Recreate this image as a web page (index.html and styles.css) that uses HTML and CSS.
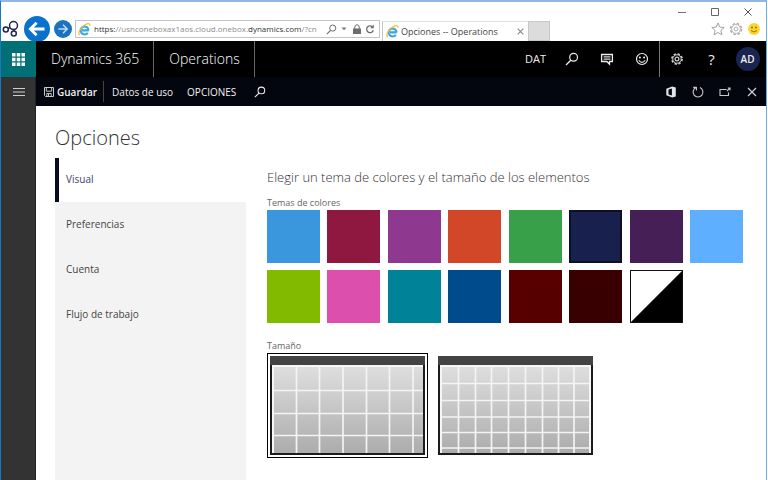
FILE: index.html
```html
<!DOCTYPE html>
<html lang="es">
<head>
<meta charset="utf-8">
<title>Opciones -- Operations</title>
<link rel="stylesheet" href="styles.css">
</head>
<body>
<svg class="defs" aria-hidden="true">
  <defs>
    <linearGradient id="shade" x1="0" y1="0" x2="0" y2="1">
      <stop offset="0" stop-color="#dedede"/><stop offset="1" stop-color="#acacac"/>
    </linearGradient>
    <symbol id="search" viewBox="0 0 14 14">
      <circle cx="8.6" cy="5.2" r="3.9" fill="none" stroke="currentColor" stroke-width="1.2"/>
      <path d="M5.8 8.2L1 13" fill="none" stroke="currentColor" stroke-width="1.3"/>
    </symbol>
    <symbol id="ie" viewBox="0 0 14 14">
      <path d="M11.6 8H4.3M11.4 7.8A4.3 4.3 0 1 0 10.6 10.6" fill="none" stroke="#35a7e3" stroke-width="2.3"/>
      <path d="M2 13C-1 11.5 3 4 8 1.6C11 .2 13.4.4 12.7 3.2" fill="none" stroke="#f2bd2c" stroke-width="1.3"/>
    </symbol>
    <symbol id="close" viewBox="0 0 10 10">
      <path d="M1 1L9 9M9 1L1 9" fill="none" stroke="currentColor" stroke-width="1.6"/>
    </symbol>
  </defs>
</svg>
<div class="window">
  <header class="browser">
    <svg class="site-logo" viewBox="0 0 18 18" aria-hidden="true" fill="none" stroke="#20264f" stroke-width="1.5">
      <circle cx="11.5" cy="5.6" r="4"/><circle cx="3.8" cy="9.6" r="2.5"/><circle cx="11.8" cy="13.6" r="2.5"/><path d="M6.2 8.6L8 7.4M11.8 9.6V11"/>
    </svg>
    <button class="nav-btn back" aria-label="Atrás"><svg viewBox="0 0 26 26"><path d="M20.5 13H7M12.6 6.8L6.4 13L12.6 19.2" fill="none" stroke="#fff" stroke-width="2.8"/></svg></button>
    <button class="nav-btn forward" aria-label="Adelante"><svg viewBox="0 0 18 18"><path d="M4.5 9H13M9 4.8L13.2 9L9 13.2" fill="none" stroke="#c4e0f6" stroke-width="1.4"/></svg></button>
    <div class="address">
      <svg class="ie" aria-hidden="true"><use href="#ie"/></svg>
      <span class="url">https:<span class="dim">//usnconeboxax1aos.cloud.onebox.</span>dynamics.com<span class="dim">/?cn</span></span>
      <svg class="addr-search" aria-hidden="true"><use href="#search"/></svg>
      <svg class="addr-caret" viewBox="0 0 6 4" aria-hidden="true"><path d="M.5.5H5.5L3 3.3z" fill="#777"/></svg>
      <svg class="addr-lock" viewBox="0 0 8 10" aria-hidden="true"><path d="M1.8 5V3a2.2 2.2 0 0 1 4.400 0V5" fill="#fff" stroke="#6d6d6d"/><path d="M0 4.500H8V10H0z" fill="#6d6d6d"/></svg>
      <svg class="addr-reload" viewBox="0 0 10 10" aria-hidden="true"><path d="M8.3 6.2A3.4 3.4 0 1 1 7.2 2.6" fill="none" stroke="#6d6d6d" stroke-width="1.3"/><path d="M8.8.6V4.2H5.2z" fill="#6d6d6d"/></svg>
    </div>
    <div class="tab">
      <svg class="ie" aria-hidden="true"><use href="#ie"/></svg>
      <span class="tab-title">Opciones -- Operations</span>
      <button class="plain tab-close" aria-label="Cerrar pestaña"><svg><use href="#close"/></svg></button>
    </div>
    <button class="new-tab" aria-label="Nueva pestaña"></button>
    <div class="chrome-end">
      <div class="window-controls">
        <button class="plain" aria-label="Minimizar"><svg viewBox="0 0 8 8"><path d="M0 4.5H8" stroke="#777"/></svg></button>
        <button class="plain" aria-label="Maximizar"><svg viewBox="0 0 8 8"><path d="M.5.5H7.5V7.5H.5z" fill="none" stroke="#666"/></svg></button>
        <button class="plain" aria-label="Cerrar"><svg viewBox="0 0 8 8"><path d="M.5.5L7.5 7.5M7.5.5L.5 7.5" stroke="#555"/></svg></button>
      </div>
      <div class="browser-tools">
        <button class="plain" aria-label="Favoritos"><svg viewBox="0 0 14 14"><path d="M7 1L8.8 5.1L13.2 5.5L9.9 8.4L10.9 12.8L7 10.5L3.1 12.8L4.1 8.4L.8 5.5L5.2 5.1z" fill="none" stroke="#999" stroke-width=".9"/></svg></button>
        <button class="plain" aria-label="Herramientas"><svg viewBox="0 0 14 14" fill="none" stroke="#aaa"><circle cx="7" cy="7" r="5.5" stroke-width="1.4" stroke-dasharray="2.6 1.72"/><circle cx="7" cy="7" r="4.4" stroke-width=".8"/><circle cx="7" cy="7" r="1.9" stroke-width=".9"/></svg></button>
        <button class="plain" aria-label="Comentarios"><svg viewBox="0 0 14 14"><circle cx="7" cy="7" r="5.9" fill="#fbd42c"/><circle cx="5" cy="5.5" r=".9" fill="#8a6a10"/><circle cx="9" cy="5.5" r=".9" fill="#8a6a10"/><path d="M4 8.5Q7 11.5 10 8.5" fill="none" stroke="#8a6a10" stroke-width=".9"/></svg></button>
      </div>
    </div>
  </header>

  <div class="app">
    <aside class="rail">
      <button class="plain waffle" aria-label="Aplicaciones"><svg viewBox="0 0 13 13" fill="#fff"><path d="M0 0h3.5v3.5H0zM4.75 0h3.5v3.5h-3.5zM9.5 0H13v3.5H9.5zM0 4.75h3.5v3.5H0zM4.75 4.75h3.5v3.5h-3.5zM9.5 4.75H13v3.5H9.5zM0 9.5h3.5V13H0zM4.75 9.5h3.5V13h-3.5zM9.5 9.5H13V13H9.5z"/></svg></button>
      <button class="plain menu" aria-label="Menú"><svg viewBox="0 0 12 8"><path d="M0 .5H12M0 4H12M0 7.5H12" stroke="#d0d0d0"/></svg></button>
    </aside>
    <div class="body">
      <div class="topbar">
        <a class="brand" href="#">Dynamics 365</a>
        <a class="brand" href="#">Operations</a>
        <div class="top-actions">
          <span class="company">DAT</span>
          <button class="plain" aria-label="Buscar"><svg><use href="#search"/></svg></button>
          <button class="plain" aria-label="Mensajes"><svg viewBox="0 0 14 14"><path d="M1.6 2.5H12.4V9.5H9.5V12.2L6.8 9.5H1.6z" fill="none" stroke="#eee" stroke-width="1.3"/><path d="M3.6 4.8H10.4M3.6 7.1H10.4" stroke="#ddd" stroke-width="1.2"/></svg></button>
          <button class="plain" aria-label="Opinión"><svg viewBox="0 0 14 14"><circle cx="7" cy="7" r="5.5" fill="none" stroke="#eee" stroke-width="1.2"/><circle cx="4.9" cy="5.4" r="1" fill="#eee"/><circle cx="9.1" cy="5.4" r="1" fill="#eee"/><path d="M3.8 8.2Q7 12.6 10.2 8.2" fill="none" stroke="#eee" stroke-width="1.1"/></svg></button>
          <button class="plain split" aria-label="Configuración"><svg viewBox="0 0 14 14" fill="none" stroke="#ccc"><circle cx="7" cy="7" r="5.1" stroke-width="1.6" stroke-dasharray="2.3 1.7"/><circle cx="7" cy="7" r="4.2"/><circle cx="7" cy="7" r="1.9" stroke-width="1.2"/></svg></button>
          <button class="plain help" aria-label="Ayuda">?</button>
          <button class="plain user"><span class="avatar">AD</span></button>
        </div>
      </div>
      <div class="commands">
        <button class="plain save"><svg viewBox="0 0 10 10" fill="none" stroke="#c9c9cc"><path d="M.5.5H9.5V9.5H1.5L.5 8.5zM2.3.5V4.2H7.7V.5M2.8 9.5V6.5H7.2V9.5M4.5 7V9"/></svg>Guardar</button>
        <button class="plain">Datos de uso</button>
        <button class="plain">OPCIONES</button>
        <button class="plain find" aria-label="Buscar acción"><svg><use href="#search"/></svg></button>
        <div class="page-actions">
          <button class="plain" aria-label="Office"><svg viewBox="0 0 12 12"><path fill-rule="evenodd" d="M1.3 2.8L7.2.6L10.8 1.6V10.4L7.2 11.4L1.3 9.3zM3.5 3.6V8.6L6.9 9.6V2.4z" fill="#e4e4ea"/></svg></button>
          <button class="plain" aria-label="Actualizar"><svg viewBox="0 0 12 12"><path d="M4 1.6A4.900 4.900 0 1 0 8 1.6M1.200 1.400H4.400V4.400" fill="none" stroke="#c9c9cc" stroke-width="1.1"/></svg></button>
          <button class="plain" aria-label="Abrir en ventana nueva"><svg viewBox="0 0 12 12"><path d="M7.500 3.500H1V9.500H9.500V6.500M8 5L10.600 2.400M8.800 2H11V4.200" fill="none" stroke="#c9c9cc" stroke-width="1.1"/></svg></button>
          <button class="plain" aria-label="Cerrar página"><svg viewBox="0 0 12 12"><path d="M2 2L10 10M10 2L2 10" stroke="#d4d4d8" stroke-width="1.1"/></svg></button>
        </div>
      </div>
      <main class="page">
        <h1>Opciones</h1>
        <div class="columns">
          <nav class="sections">
            <a class="current" href="#">Visual</a>
            <a href="#">Preferencias</a>
            <a href="#">Cuenta</a>
            <a href="#">Flujo de trabajo</a>
          </nav>
          <form class="settings">
            <h2>Elegir un tema de colores y el tamaño de los elementos</h2>
            <fieldset>
              <legend>Temas de colores</legend>
              <div class="themes">
                <input type="radio" name="theme" class="sky" aria-label="Azul cielo">
                <input type="radio" name="theme" class="wine" aria-label="Vino">
                <input type="radio" name="theme" class="purple" aria-label="Morado">
                <input type="radio" name="theme" class="orange" aria-label="Naranja">
                <input type="radio" name="theme" class="green" aria-label="Verde">
                <input type="radio" name="theme" class="navy" aria-label="Azul marino" checked>
                <input type="radio" name="theme" class="plum" aria-label="Ciruela">
                <input type="radio" name="theme" class="light" aria-label="Azul claro">
                <input type="radio" name="theme" class="lime" aria-label="Lima">
                <input type="radio" name="theme" class="pink" aria-label="Rosa">
                <input type="radio" name="theme" class="teal" aria-label="Turquesa">
                <input type="radio" name="theme" class="blue" aria-label="Azul">
                <input type="radio" name="theme" class="red" aria-label="Rojo oscuro">
                <input type="radio" name="theme" class="brown" aria-label="Marrón">
                <input type="radio" name="theme" class="contrast" aria-label="Contraste alto">
              </div>
            </fieldset>
            <fieldset>
              <legend>Tamaño</legend>
              <div class="sizes">
                <label class="size"><input type="radio" name="size" aria-label="Grande" checked>
                  <svg viewBox="0 0 155 99"><path d="M0 0H155V99H0z" fill="#1c1c1c"/><path d="M0 0H155V9H0z" fill="#434343"/><path d="M2 9H153V97H2z" fill="#f6f6f6"/><path d="M4 11H153V97H4z" fill="url(#shade)"/><path d="M26.5 10V97M49.5 10V97M73 10V97M96.500 10V97M119.500 10V97M143 10V97M3 34.500H153M3 57.500H153M3 79.500H153" stroke="#f4f4f4" stroke-width="1.7"/></svg>
                </label>
                <label class="size"><input type="radio" name="size" aria-label="Pequeño">
                  <svg viewBox="0 0 155 99"><path d="M0 0H155V99H0z" fill="#1c1c1c"/><path d="M0 0H155V9H0z" fill="#434343"/><path d="M2 9H153V97H2z" fill="#f6f6f6"/><path d="M4 11H151V97H4z" fill="url(#shade)"/><path d="M20.500 10V97M37.500 10V97M53.500 10V97M70.500 10V97M87.500 10V97M104.500 10V97M120.500 10V97M136 10V97M3 27.500H152M3 44.500H152M3 61H152M3 76.500H152M3 92H152" stroke="#f4f4f4" stroke-width="1.7"/></svg>
                </label>
              </div>
            </fieldset>
          </form>
        </div>
      </main>
    </div>
  </div>
</div>
</body>
</html>
```
FILE: styles.css
```css
* { box-sizing: border-box; }
body {
  margin: 0;
  background: #fff;
  color: #444;
  font-family: "Open Sans", "Noto Sans", sans-serif;
  font-size: 10px;
  line-height: 16px;
}
svg { display: block; flex: none; }
a { color: inherit; text-decoration: none; }
button { font: inherit; color: inherit; }
.defs { position: absolute; width: 0; height: 0; }
.plain {
  display: flex;
  align-items: center;
  justify-content: center;
  border: 0;
  padding: 0;
  background: none;
}
.window {
  display: flex;
  flex-direction: column;
  min-height: 100vh;
  margin-right: 1px;
  border: 1px solid #67aeee;
  border-left-color: #1878c4;
  border-top: 2px solid #8fb9e4;
  border-bottom: 0;
}

/* Browser chrome */
.browser {
  display: flex;
  align-items: flex-end;
  height: 39px;
  overflow: hidden;
}
.site-logo { width: 18px; height: 18px; margin: 0 4px 3px 1px; }
.nav-btn {
  flex: none;
  padding: 0;
  border: 0;
  border-radius: 50%;
  background: #0a72cc;
}
.back { width: 26px; height: 26px; margin-bottom: -1px; }
.forward { width: 18px; height: 18px; margin: 0 3px 3px 4px; background: #1b72bf; }
.address {
  display: flex;
  align-items: center;
  flex: 0 1 305px;
  height: 18px;
  margin-bottom: 3px;
  padding: 0 4px 0 2px;
  border: 1px solid #c4c4c4;
}
.ie { width: 13px; height: 13px; }
.url {
  flex: 1;
  margin-left: 3px;
  overflow: hidden;
  white-space: nowrap;
  color: #333;
  font-size: 8px;
}
.dim { color: #8c8c8c; }
.addr-search { width: 11px; height: 11px; color: #666; }
.addr-caret { width: 6px; height: 4px; margin: 0 6px 0 4px; }
.addr-lock { width: 8px; height: 10px; margin-right: 4px; }
.addr-reload { width: 10px; height: 10px; }
.tab {
  display: flex;
  align-items: center;
  flex: 0 1 146px;
  height: 20px;
  margin-left: 2px;
  padding: 0 3px;
  border-left: 1px solid #c4c4c4;
  border-top: 1px solid #ddd;
}
.tab-title { flex: 1; margin-left: 2px; white-space: nowrap; font-size: 9px; }
.tab-close { width: 9px; color: #888; }
.tab-close svg { width: 7px; height: 7px; }
.new-tab {
  width: 22px;
  height: 20px;
  padding: 0;
  border: 1px solid #c8c8c8;
  background: #dcdcdc;
}
.chrome-end {
  display: flex;
  flex-direction: column;
  align-items: flex-end;
  justify-content: space-between;
  align-self: stretch;
  margin-left: auto;
  padding: 6px 5px 5px 0;
}
.window-controls { display: flex; gap: 25px; padding-right: 9px; }
.window-controls svg { width: 8px; height: 8px; }
.browser-tools { display: flex; gap: 4px; }
.browser-tools svg { width: 14px; height: 14px; }

/* Application frame */
.app { display: flex; flex: 1; }
.rail { flex: none; width: 35px; background: #333; border-right: 1px solid #222; }
.waffle { width: 35px; height: 36px; background: #006f76; }
.waffle svg { width: 13px; height: 13px; }
.menu { width: 35px; height: 29px; }
.menu svg { width: 12px; height: 8px; }
.body { display: flex; flex: 1; flex-direction: column; min-width: 0; }
.topbar { display: flex; height: 36px; background: #000; color: #eee; }
.brand {
  display: flex;
  align-items: center;
  padding: 0 14px 0 15px;
  border-right: 1px solid #666;
  color: #fff;
  font-size: 14px;
  font-weight: 300;
  white-space: nowrap;
}
.top-actions { display: flex; align-items: stretch; margin-left: auto; }
.top-actions .plain { width: 35px; }
.top-actions svg { width: 14px; height: 14px; }
.company { align-self: center; padding-right: 8px; font-size: 11px; }
.top-actions .split { border-left: 1px solid #777; }
.help { font-size: 15px; }
.top-actions .user { width: 37px; }
.avatar {
  width: 24px;
  border-radius: 50%;
  background: #1a2450;
  font-size: 10px;
  font-weight: 600;
  line-height: 24px;
}
.commands {
  display: flex;
  align-items: center;
  gap: 14px;
  height: 29px;
  padding-left: 8px;
  background: #04060f;
  color: #f0f0f0;
}
.commands .plain { white-space: nowrap; }
.commands .save {
  gap: 3px;
  height: 21px;
  margin-right: -6px;
  padding-right: 6px;
  border-right: 1px solid #444;
  font-weight: 600;
}
.save svg { width: 10px; height: 10px; }
.find { margin-left: 4px; }
.find svg { width: 12px; height: 12px; }
.page-actions { display: flex; margin-left: auto; padding-right: 1px; }
.page-actions .plain { width: 27px; }
.page-actions svg { width: 12px; height: 12px; }

/* Options page */
.page { display: flex; flex: 1; flex-direction: column; padding: 18px 22px 0 19px; }
h1 {
  margin: 0 0 6px;
  color: #333;
  font-size: 20px;
  font-weight: 300;
  line-height: 28px;
}
.columns { display: flex; flex: 1; gap: 21px; }
.sections { flex: none; width: 191px; background: #f3f3f3; }
.sections a {
  display: flex;
  align-items: center;
  height: 45px;
  padding: 0 11px 2px;
  color: #444;
}
.sections .current {
  height: 44px;
  padding-left: 7px;
  border-left: 4px solid #070b22;
  background: #fff;
  color: #3b416c;
}
.settings { flex: 1; max-width: 476px; padding-top: 9px; }
h2 {
  margin: 0 0 9px;
  color: #333;
  font-size: 13px;
  font-weight: 300;
  line-height: 20px;
}
fieldset { min-width: 0; margin: 0 0 16px; padding: 0; border: 0; }
legend { padding: 0; color: #666; font-size: 9px; line-height: 14px; }
.themes {
  display: grid;
  grid-template-columns: repeat(8, 53px);
  justify-content: space-between;
  row-gap: 7px;
}
.themes input { width: 53px; height: 53px; margin: 0; appearance: none; }
.sky { background: #3a96dd; }
.wine { background: #8e1840; }
.purple { background: #8e398f; }
.orange { background: #d14727; }
.green { background: #38a048; }
.navy { background: #18214d; border: 2px solid #0d1020; }
.plum { background: #451f55; }
.light { background: #5eafff; }
.lime { background: #82ba00; }
.pink { background: #dc4fad; }
.teal { background: #008299; }
.blue { background: #004b8b; }
.red { background: #570000; }
.brown { background: #380000; }
.contrast { background: linear-gradient(135deg, #fff 49%, #000 51%); border: 1px solid #111; }
.sizes { display: flex; gap: 7px; }
.size { padding: 2px; border: 1px solid transparent; }
.size:has(:checked) { border-color: #000; }
.size input { position: absolute; margin: 0; appearance: none; }
.size svg { width: 155px; height: 99px; }
```
